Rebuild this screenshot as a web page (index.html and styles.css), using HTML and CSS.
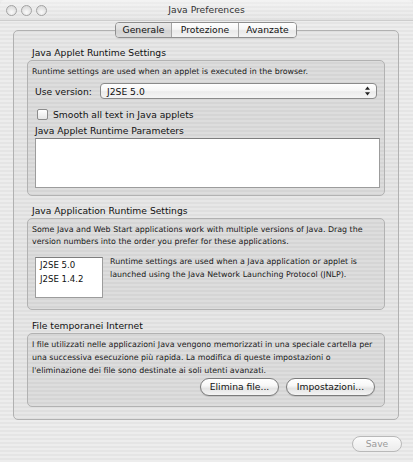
FILE: index.html
```html
<!DOCTYPE html>
<html lang="it">
<head>
<meta charset="utf-8">
<title>Java Preferences</title>
<link rel="stylesheet" href="styles.css">
</head>
<body>
<div class="window">
  <header class="titlebar">
    <div class="lights"><span></span><span></span><span></span></div>
    <h1 class="title">Java Preferences</h1>
  </header>

  <main class="content">
    <div class="tabview">
      <nav class="tabs">
        <span class="tab tab-general selected">Generale</span>
        <span class="tab tab-security">Protezione</span>
        <span class="tab tab-advanced">Avanzate</span>
      </nav>

      <div class="tabpanel">
        <section class="group">
          <h2 class="group-title">Java Applet Runtime Settings</h2>
          <div class="box box-applet">
            <p class="note">Runtime settings are used when an applet is executed in the browser.</p>
            <div class="version-row">
              <span class="label">Use version:</span>
              <div class="popup">
                <span class="popup-value">J2SE 5.0</span>
                <svg class="popup-arrows" width="7" height="10" viewBox="0 0 7 10">
                  <path d="M3.5 0.5 L6 3.8 L1 3.8 Z" fill="#222"/>
                  <path d="M3.5 9.5 L6 6.2 L1 6.2 Z" fill="#222"/>
                </svg>
              </div>
            </div>
            <label class="check-row">
              <span class="checkbox"></span>
              <span class="label">Smooth all text in Java applets</span>
            </label>
            <div class="sub-title">Java Applet Runtime Parameters</div>
            <div class="textarea"></div>
          </div>
        </section>

        <section class="group group-app">
          <h2 class="group-title">Java Application Runtime Settings</h2>
          <div class="box box-app">
            <p class="note">Some Java and Web Start applications work with multiple versions of Java. Drag the version numbers into the order you prefer for these applications.</p>
            <div class="app-row">
              <ul class="version-list">
                <li>J2SE 5.0</li>
                <li>J2SE 1.4.2</li>
              </ul>
              <p class="note side-note">Runtime settings are used when a Java application or applet is launched using the Java Network Launching Protocol (JNLP).</p>
            </div>
          </div>
        </section>

        <section class="group group-cache">
          <h2 class="group-title">File temporanei Internet</h2>
          <div class="box box-cache">
            <p class="note note-cache">I file utilizzati nelle applicazioni Java vengono memorizzati in una speciale cartella per una successiva esecuzione più rapida. La modifica di queste impostazioni o l'eliminazione dei file sono destinate ai soli utenti avanzati.</p>
            <div class="button-row">
              <span class="pill btn-delete">Elimina file...</span>
              <span class="pill btn-settings">Impostazioni...</span>
            </div>
          </div>
        </section>
      </div>
    </div>

    <footer class="footer">
      <span class="pill pill-disabled btn-save">Save</span>
    </footer>
  </main>
</div>
</body>
</html>
```

FILE: styles.css
```css
* { box-sizing: border-box; margin: 0; padding: 0; }

html, body {
  width: 413px;
  height: 462px;
  overflow: hidden;
}

body {
  font-family: "DejaVu Sans", "Liberation Sans", sans-serif;
  color: #111;
  background: #e8e8e8;
}

/* window chrome with aqua pinstripes */
.window {
  width: 413px;
  height: 462px;
  background: repeating-linear-gradient(to bottom, #ededed 0, #ededed 2px, #e5e5e5 2px, #e5e5e5 4px);
  display: flex;
  flex-direction: column;
}

.titlebar {
  height: 21px;
  flex: none;
  display: flex;
  align-items: center;
  border-bottom: 1px solid #cdcdcd;
  background: linear-gradient(to bottom, rgba(255,255,255,0.35), rgba(0,0,0,0.02));
  border-radius: 5px 5px 0 0;
}

.lights {
  display: flex;
  gap: 4px;
  padding-left: 6px;
  width: 60px;
}

.lights span {
  width: 11px;
  height: 11px;
  border-radius: 50%;
  border: 1px solid #a3a3a3;
  background: radial-gradient(circle at 50% 70%, #fafafa 0, #e2e2e2 60%, #cfcfcf 100%);
}

.title {
  flex: 1;
  margin-right: 60px;
  text-align: center;
  font-size: 9.2px;
  font-weight: normal;
  color: #333;
  line-height: 20px;
}

.content {
  flex: 1;
  padding: 1px 14px 0 13px;
  display: flex;
  flex-direction: column;
}

/* tab view */
.tabview {
  display: flex;
  flex-direction: column;
}

.tabs {
  position: relative;
  z-index: 1;
  align-self: flex-start;
  margin-left: 102px;
  display: flex;
  height: 16px;
  border: 1px solid #8f8f8f;
  border-radius: 4px;
  overflow: hidden;
  box-shadow: 0 1px 0 rgba(0,0,0,0.06);
}

.tab {
  height: 14px;
  line-height: 14px;
  font-size: 9.2px;
  text-align: center;
  color: #111;
  background: linear-gradient(to bottom, #ffffff 0, #f6f6f6 45%, #e9e9e9 55%, #f3f3f3 100%);
}

.tab + .tab { border-left: 1px solid #a5a5a5; }
.tab-general { width: 55px; }
.tab-security { width: 67px; }
.tab-advanced { width: 58px; }

.tab.selected {
  background: linear-gradient(to bottom, #e9e9e9 0, #dedede 45%, #d2d2d2 55%, #dcdcdc 100%);
}

.tabpanel {
  margin-top: -8px;
  height: 390px;
  border: 1px solid #b1b1b1;
  border-radius: 5px;
  background: rgba(0,0,0,0.025);
  padding: 15px 13px 0 13px;
}

/* group boxes */
.group-title {
  font-size: 9.2px;
  font-weight: normal;
  line-height: 13px;
  height: 13px;
  padding-left: 5px;
  margin-bottom: 1px;
  color: #111;
}

.group-app { margin-top: 8px; }
.group-cache { margin-top: 9px; }

.box {
  border: 1px solid #b2b2b2;
  border-radius: 5px;
  background: rgba(0,0,0,0.045);
  padding: 5px 4px 0 4px;
}

.note {
  font-size: 7.9px;
  line-height: 11px;
  color: #1a1a1a;
  max-width: 346px;
}

.box-applet { height: 136px; }
.box-app { height: 92px; }
.box-cache { height: 74px; padding-top: 4px; }

.box-app .note { line-height: 12px; }
.note-cache { line-height: 13px; }

.label {
  font-size: 9.2px;
  color: #111;
}

.version-row {
  margin-top: 6px;
  height: 16px;
  display: flex;
  align-items: center;
  padding-left: 3px;
}

.version-row .label { width: 65px; }

.popup {
  width: 277px;
  height: 16px;
  border: 1px solid #8a8a8a;
  border-radius: 4px;
  background: linear-gradient(to bottom, #ffffff 0, #f7f7f7 45%, #ebebeb 55%, #f5f5f5 100%);
  display: flex;
  align-items: center;
  justify-content: space-between;
  padding: 0 5px 0 6px;
}

.popup-value { font-size: 9.2px; }

.check-row {
  margin-top: 8px;
  height: 15px;
  display: flex;
  align-items: center;
  padding-left: 5px;
  gap: 5px;
}

.checkbox {
  width: 11px;
  height: 11px;
  border: 1px solid #8c8c8c;
  border-radius: 2px;
  background: linear-gradient(to bottom, #ffffff, #e6e6e6);
}

.sub-title {
  margin-top: 3px;
  height: 12px;
  line-height: 12px;
  font-size: 9.2px;
  padding-left: 3px;
}

.textarea {
  margin: 1px 0 0 3px;
  width: 345px;
  height: 50px;
  background: #fff;
  border: 1px solid #9c9c9c;
  border-top-color: #7e7e7e;
}

.app-row {
  margin-top: 9px;
  display: flex;
  align-items: flex-start;
  gap: 7px;
  padding-left: 3px;
}

.version-list {
  list-style: none;
  width: 68px;
  height: 41px;
  flex: none;
  background: #fff;
  border: 1px solid #9c9c9c;
  border-top-color: #7e7e7e;
  padding: 0 0 0 4px;
}

.version-list li {
  font-size: 8.6px;
  line-height: 14px;
}

.box-app .side-note {
  margin-top: -1px;
  line-height: 12.5px;
  max-width: 266px;
}

.button-row {
  margin-top: 1px;
  display: flex;
  justify-content: flex-end;
  gap: 7px;
  padding-right: 5px;
}

.pill {
  height: 18px;
  line-height: 16px;
  border: 1px solid #7b7b7b;
  border-radius: 9px;
  font-size: 9.2px;
  text-align: center;
  color: #111;
  background: linear-gradient(to bottom, #ffffff 0, #f8f8f8 40%, #e4e4e4 60%, #f4f4f4 100%);
  box-shadow: 0 1px 1px rgba(0,0,0,0.12);
}

.btn-delete { width: 79px; }
.btn-settings { width: 89px; }

.footer {
  margin-top: 16px;
  display: flex;
  justify-content: flex-end;
  margin-right: -3px;
}

.btn-save {
  width: 50px;
  height: 16px;
  line-height: 14px;
  border-radius: 8px;
}

.pill-disabled {
  color: #9a9a9a;
  border-color: #b9b9b9;
  box-shadow: none;
  background: linear-gradient(to bottom, #fbfbfb, #ececec);
}
```
